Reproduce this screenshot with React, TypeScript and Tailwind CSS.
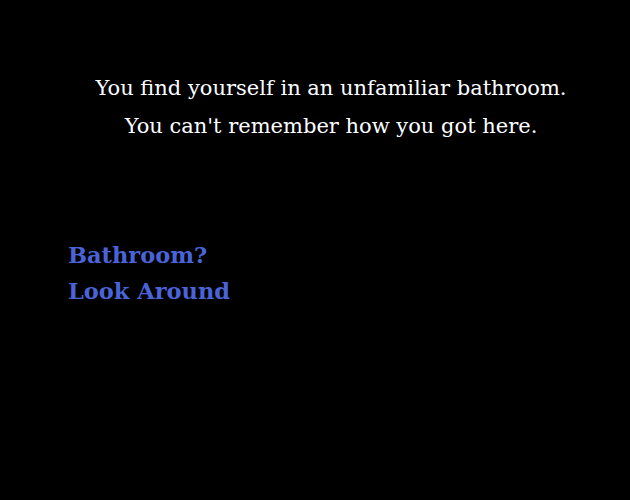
export default function App() {
  return (
    <div className="min-h-[500px] w-full bg-black font-['DejaVu_Serif',serif]">
      <div className="pl-8 pt-[69px] text-center text-[21px] leading-[38px] text-white">
        <p>You find yourself in an unfamiliar bathroom.</p>
        <p>You can't remember how you got here.</p>
      </div>
      <div className="mt-[92px] flex flex-col items-start pl-[68px] text-[22.5px] font-bold leading-[36px] text-[#4a64d8]">
        <a className="cursor-pointer">Bathroom?</a>
        <a className="cursor-pointer">Look Around</a>
      </div>
    </div>
  )
}
